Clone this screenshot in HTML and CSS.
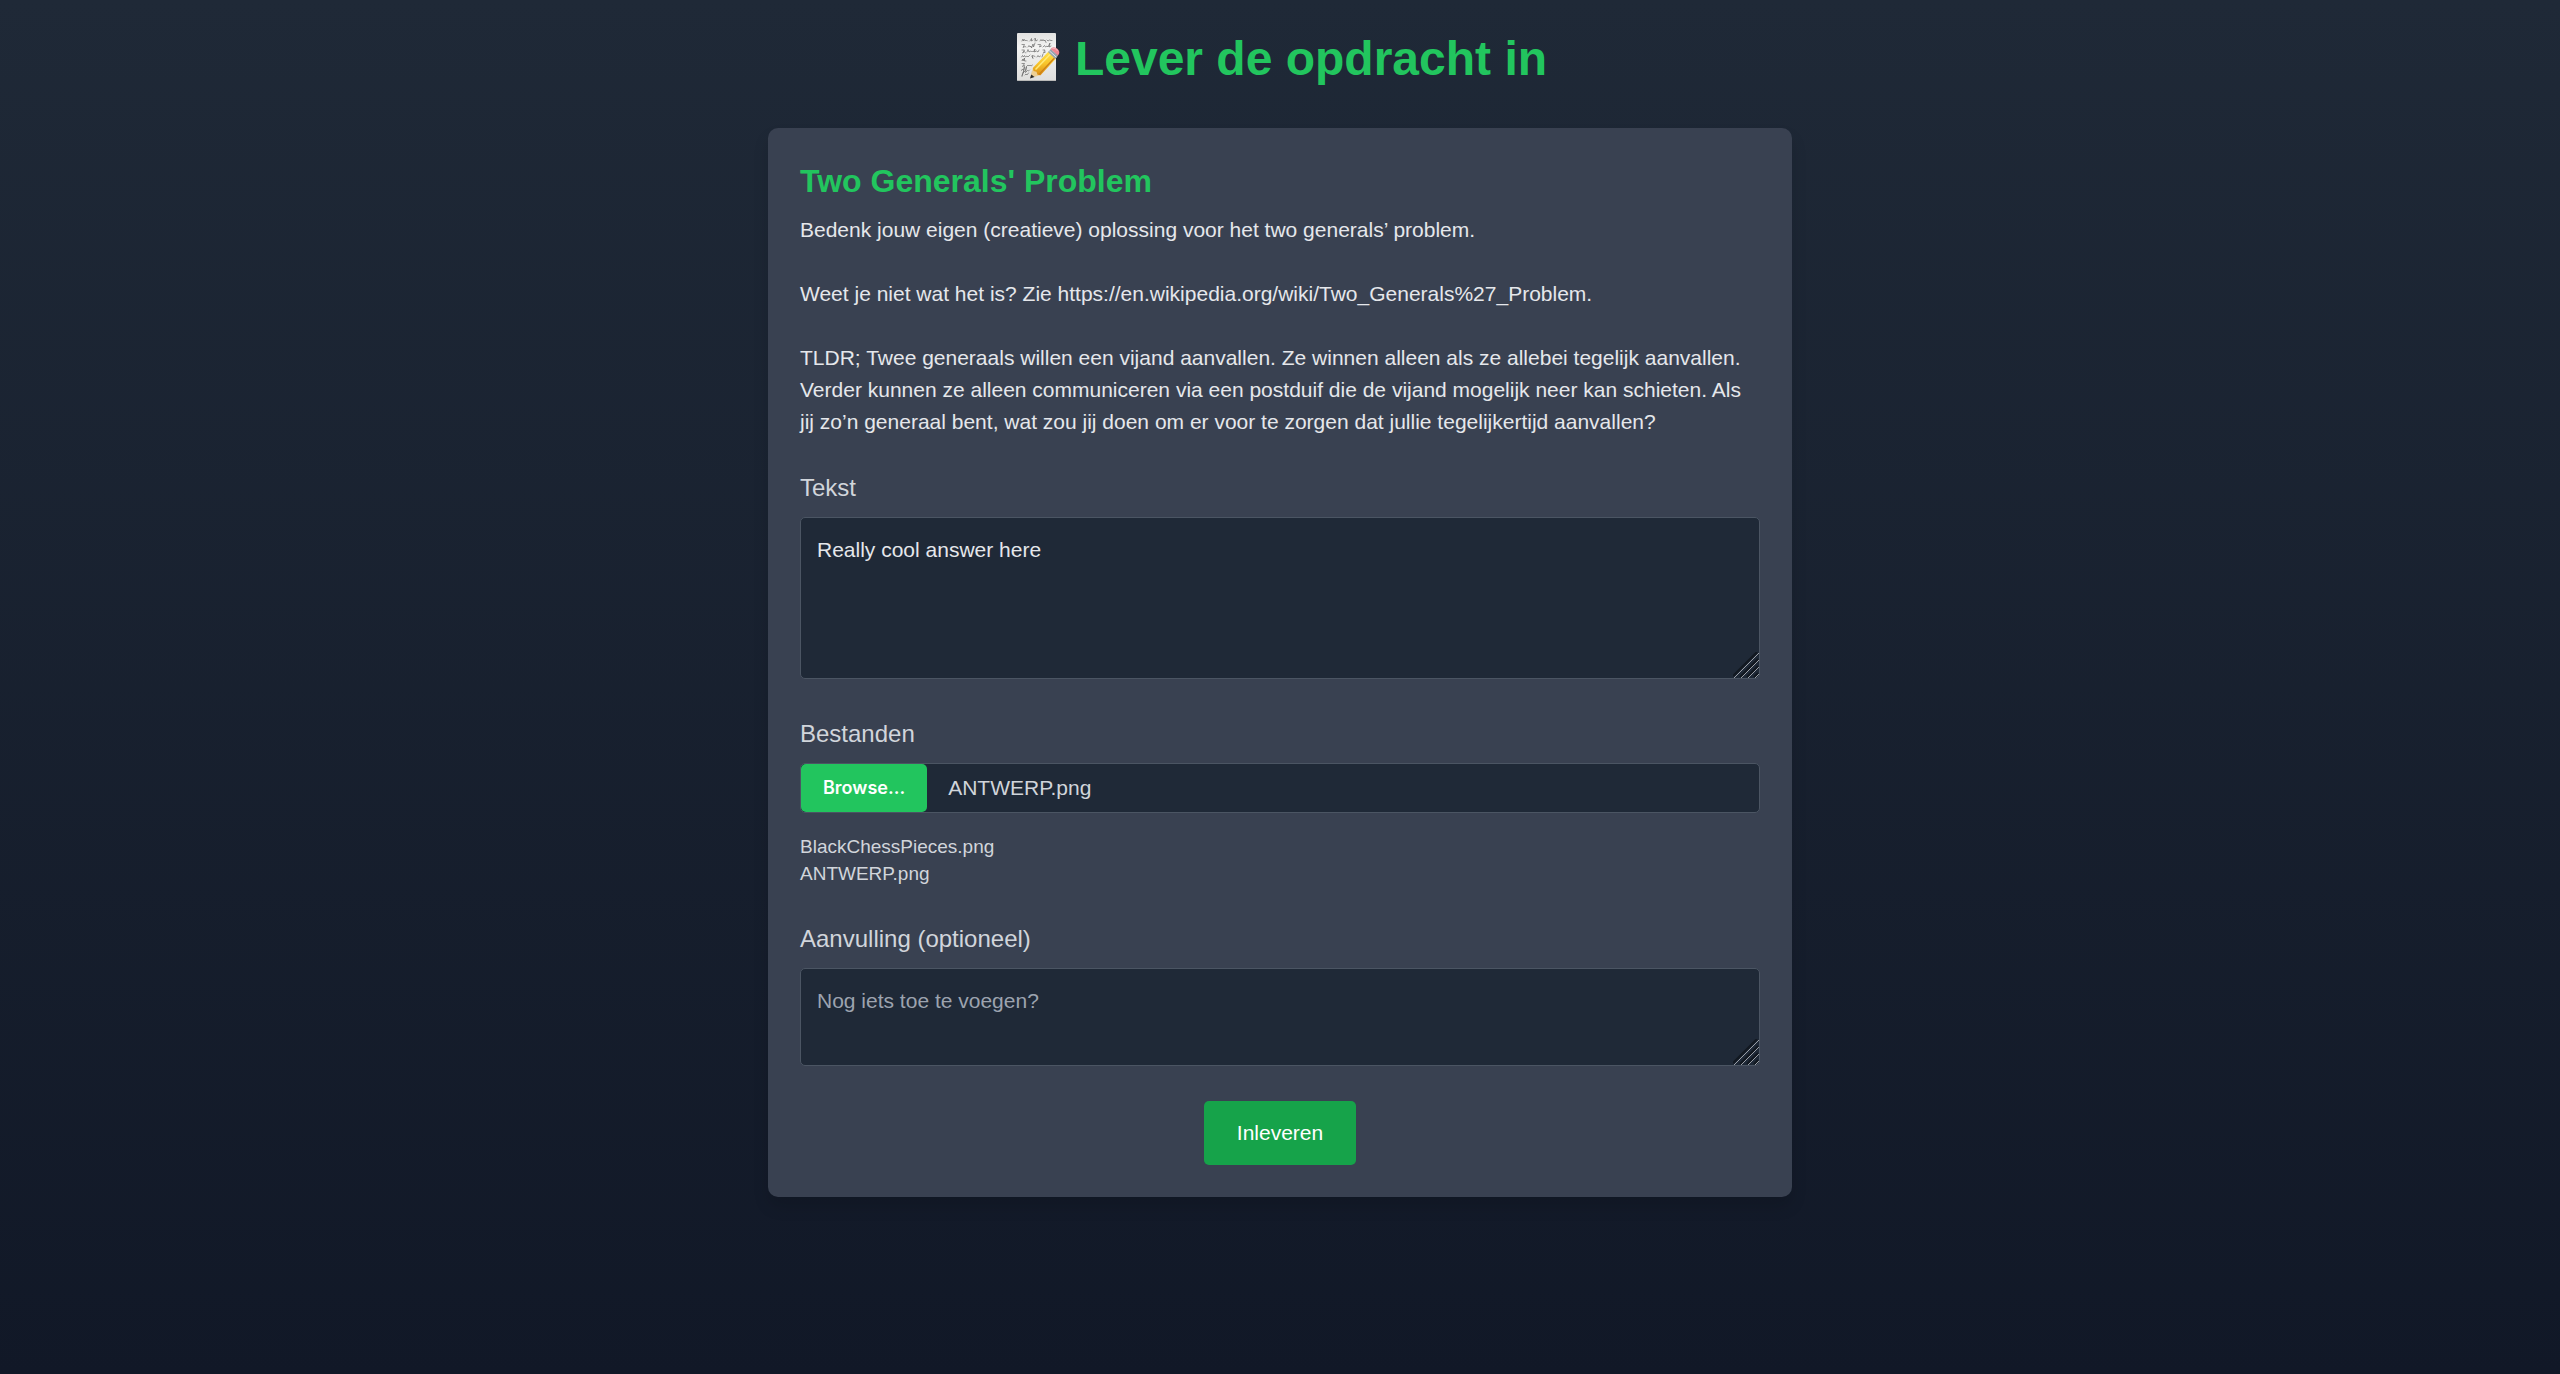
FILE: index.html
```html
<!DOCTYPE html>
<html lang="nl">
<head>
<meta charset="utf-8">
<meta name="viewport" content="width=device-width, initial-scale=1">
<title>Lever de opdracht in</title>
<link rel="stylesheet" href="styles.css">
</head>
<body>
<main class="page">
  <h1 class="page-title">
    <svg class="memo-icon" viewBox="-4 0 50 52" aria-hidden="true">
      <defs>
        <linearGradient id="paper" x1="0" y1="0" x2="0" y2="1"><stop offset="0" stop-color="#e2e2e1"/><stop offset=".3" stop-color="#f3f3f2"/><stop offset="1" stop-color="#dededd"/></linearGradient>
        <linearGradient id="wood" x1="0" y1="0" x2="0" y2="1"><stop offset="0" stop-color="#ffe04a"/><stop offset=".5" stop-color="#f8c52b"/><stop offset="1" stop-color="#d98c14"/></linearGradient>
      </defs>
      <rect x="0" y="0" width="39" height="48" rx="1" fill="url(#paper)"/>
      <path d="M1 47.500h38" stroke="#b9b9b8" stroke-width="1"/>
      <g fill="none" stroke="#555" stroke-width=".6" stroke-linecap="round" stroke-linejoin="round">
        <path d="M5 8l1-2 .5 2 1-1.500 1 1.500 1-1 1 1M13 8l1.500-2.500v2.500l1.500-1M18 8v-3l1 3 1.500-1M23 8l1-1.500 1 1.500 1-1.500 1 1.500 1-1 1 2.500M30 7l1 1 1.500-1 1.500 .5h1"/>
        <path d="M5 11.500h2.500l-1.500 3 2-1 1 .5M11 14l1-1.500 1 1.500 1-1 .5 2 1.500-4 .5 3 1.500-4M21 11.500h2.500l-1 2.500 2-1M26 14l1.500-1.500 1 1.500 1.500-1 1 1 2-4-1 4 2-1"/>
        <path d="M5 17h2.500l-2 3 2-1.500 1 1.500M10 19l1-2.500 1 2.500 1.500-1 1 1 1-1 1 1 1.500-3-.5 3 2-1 1.500 1 1-2M26 17h2l-1.500 3 2-1"/>
        <path d="M4.500 24l1-1.500 1 1.500 1-1.500 1 1.500 1.500-1 1 1 2-2M15 23.500l1 2-1-3 2 .500 1 .500M20 24l1-1.500 1 1.500 1.500-1M25 24l1-3"/>
        <path d="M5 27.500l1-1.500v2l1.500-3v3h1.500"/>
        <path d="M5 30.500h2.500l-2 3 2-1M10 33l1-1 1 1 1-1 1 1 1.500-1"/>
        <path d="M4.500 37.500l1-1.500 1 1.500 1-4-1 6 2-2 1-4-1 6 2-2 1 .5 1-1"/>
        <path d="M5 42.500l1.500-4-1.500 5M8 42l1-1 1 1 1.500-2"/>
      </g>
      <path d="M13 45l5-1.500 23-23-1-3-25 21z" fill="#555" opacity=".3"/>
      <path d="M13 45l3-10 8 7z" fill="#edcf94"/>
      <path d="M13 45.500l1.300-4 3.200 2.600z" fill="#28292b"/>
      <path d="M15.800 35L31.500 18.500l7.500 7L23.500 42.300l-3-.5-1-3-3-.8z" fill="url(#wood)"/>
      <path d="M18.500 36.500L34 20.500" stroke="#ffea78" stroke-width="1.500"/>
      <path d="M22 41.500L37.500 25" stroke="#cd7f16" stroke-width="1.200"/>
      <path d="M31 19l2.800-3 7.400 6.500-3 3.500z" fill="#97a5ae"/>
      <path d="M32.200 17.700l7.200 6.600" stroke="#dce4e8" stroke-width="1"/>
      <path d="M33.600 16q2-3 5.200-1.200 3.600 2 3.500 5-.1 1.700-1.500 2.800z" fill="#ee8793"/>
      <path d="M35.500 15.500q2.500-1 5.200 2.200" stroke="#f9b9be" stroke-width="1.200" fill="none"/>
    </svg>
    <span>Lever de opdracht in</span>
  </h1>

  <form class="card">
    <h2 class="assignment-title">Two Generals' Problem</h2>
    <div class="description">
      <p>Bedenk jouw eigen (creatieve) oplossing voor het two generals’ problem.</p>
      <p>Weet je niet wat het is? Zie https://en.wikipedia.org/wiki/Two_Generals%27_Problem.</p>
      <p>TLDR; Twee generaals willen een vijand aanvallen. Ze winnen alleen als ze allebei tegelijk aanvallen. Verder kunnen ze alleen communiceren via een postduif die de vijand mogelijk neer kan schieten. Als jij zo’n generaal bent, wat zou jij doen om er voor te zorgen dat jullie tegelijkertijd aanvallen?</p>
    </div>

    <div class="field">
      <label class="field-label" for="tekst">Tekst</label>
      <div class="textarea-wrap">
        <textarea class="textarea" id="tekst" rows="4">Really cool answer here</textarea>
        <svg class="grip" viewBox="0 0 26 26" aria-hidden="true"><path class="grip-shade" d="M0 24L24 0M7 25L25 7M14 25L25 14M21 25l4-4"/><path class="grip-line" d="M1 26L26 1M8 26L26 8M15 26L26 15M22 26l4-4"/></svg>
      </div>
    </div>

    <div class="field">
      <label class="field-label" for="bestanden">Bestanden</label>
      <div class="file-control">
        <span class="file-button" aria-hidden="true">Browse...</span>
        <span class="file-name">ANTWERP.png</span>
        <input class="file-input" type="file" id="bestanden" multiple>
      </div>
      <ul class="file-list">
        <li>BlackChessPieces.png</li>
        <li>ANTWERP.png</li>
      </ul>
    </div>

    <div class="field">
      <label class="field-label" for="aanvulling">Aanvulling (optioneel)</label>
      <div class="textarea-wrap">
        <textarea class="textarea" id="aanvulling" rows="2" placeholder="Nog iets toe te voegen?"></textarea>
        <svg class="grip" viewBox="0 0 26 26" aria-hidden="true"><path class="grip-shade" d="M0 24L24 0M7 25L25 7M14 25L25 14M21 25l4-4"/><path class="grip-line" d="M1 26L26 1M8 26L26 8M15 26L26 15M22 26l4-4"/></svg>
      </div>
    </div>

    <button class="submit" type="submit">Inleveren</button>
  </form>
</main>
</body>
</html>
```
FILE: styles.css
```css
*, *::before, *::after { box-sizing: border-box; }

body {
  margin: 0;
  min-height: 100vh;
  background: linear-gradient(to bottom, #1f2937, #111827);
  color: #e5e7eb;
  font: 21px/32px "Liberation Sans", Arial, sans-serif;
}

h1, h2, p, ul { margin: 0; }

.page {
  display: flex;
  flex-direction: column;
  align-items: center;
  gap: 41px;
  padding: 31px 24px;
}

.page-title {
  display: flex;
  align-items: center;
  gap: 12px;
  color: #22c55e;
  font-size: 48px;
  line-height: 56px;
}

.memo-icon { width: 50px; height: 52px; }

.card {
  display: flex;
  flex-direction: column;
  width: 100%;
  max-width: 1024px;
  padding: 32px;
  border-radius: 10px;
  background: #394151;
  box-shadow: 0 10px 16px rgba(0, 0, 0, 0.12);
}

.assignment-title {
  margin-bottom: 12px;
  color: #22c55e;
  font-size: 32px;
  line-height: 42px;
}

.description {
  display: flex;
  flex-direction: column;
  gap: 32px;
  margin-bottom: 32px;
}

.field {
  display: flex;
  flex-direction: column;
  margin-bottom: 34px;
}

.field:last-of-type { margin-bottom: 32px; }

.field-label {
  margin-bottom: 11px;
  color: #d1d5db;
  font-size: 24px;
  line-height: 36px;
}

.textarea-wrap {
  position: relative;
  display: flex;
  margin-bottom: 3px;
}

.textarea {
  width: 100%;
  padding: 16px;
  border: 1px solid #4b5563;
  border-radius: 5px;
  outline: none;
  background: #1f2937;
  color: #e5e7eb;
  font: inherit;
  resize: vertical;
}

.textarea::placeholder { color: #9ca3af; }
.textarea::-webkit-resizer { background: transparent; }

.grip {
  position: absolute;
  right: 1px;
  bottom: 1px;
  width: 26px;
  height: 26px;
  fill: none;
  pointer-events: none;
}

.grip-line { stroke: #9a9ea5; stroke-width: 1; }
.grip-shade { stroke: #121820; stroke-width: 2; }

.file-control {
  position: relative;
  display: flex;
  align-items: center;
  gap: 21px;
  height: 50px;
  border: 1px solid #4b5563;
  border-radius: 5px;
  background: #1f2937;
  color: #d1d5db;
}

.file-button {
  padding: 8px 22px;
  border-radius: 5px;
  background: #22c55e;
  color: #ffffff;
  font: 600 18px/32px Inter, sans-serif;
}

.file-input {
  position: absolute;
  inset: 0;
  width: 100%;
  opacity: 0;
  cursor: pointer;
}

.file-list {
  margin-top: 20px;
  padding: 0;
  list-style: none;
  color: #d1d5db;
  font-size: 19px;
  line-height: 27px;
}

.submit {
  align-self: center;
  padding: 16px 33px;
  border: 0;
  border-radius: 5px;
  background: #16a34a;
  color: #ffffff;
  font: inherit;
  cursor: pointer;
}
```
